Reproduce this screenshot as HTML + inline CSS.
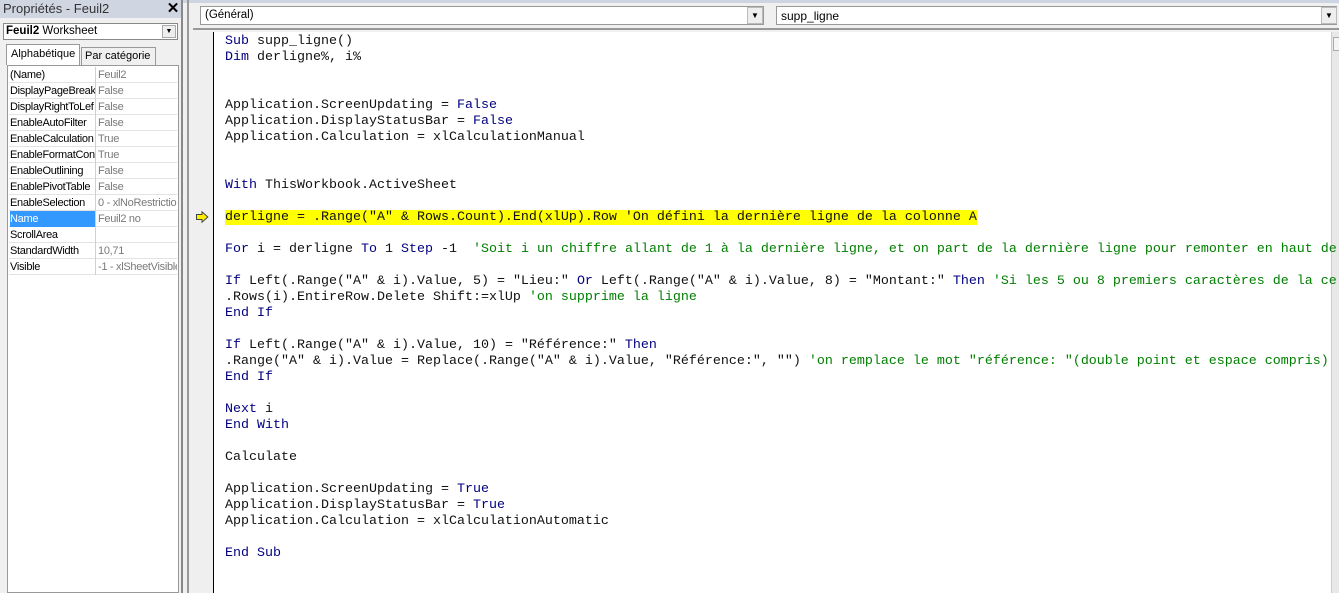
<!DOCTYPE html>
<html><head><meta charset="utf-8"><style>
*{margin:0;padding:0;box-sizing:border-box}
body{width:1339px;height:593px;overflow:hidden;background:#f0f0f0;position:relative;font-family:"Liberation Sans",sans-serif;font-size:11px}
.abs{position:absolute}
.code{position:absolute;left:225px;top:34px;font-family:"Liberation Mono",monospace;font-size:13.33px;line-height:16px;white-space:pre;color:#111}
.k{color:#00007f}.c{color:#007f00}
.hl{background:#ffff00}
.row{position:absolute;left:9px;width:168px;height:16px;border-bottom:1px solid #e3e3e3;font-size:11px;line-height:16px;letter-spacing:-0.3px}
.row span{position:absolute;top:0}
.row .n{left:1px;width:86px;overflow:hidden;white-space:nowrap;border-right:1px solid #d0d0d0;height:16px}
.row .v{left:89px;color:#7a7a7a;width:79px;overflow:hidden;white-space:nowrap}
</style></head><body>
<div class="abs" style="left:0;top:0;width:1339px;height:3px;background:#cdd5e2"></div>
<div class="abs" style="left:0;top:0;width:182px;height:18px;background:#cfd6e2"></div>
<div class="abs" style="left:3px;top:1px;font-size:13px;color:#333">Propriétés - Feuil2</div>
<div class="abs" style="left:165px;top:1px;width:16px;height:15px;font-size:15px;font-weight:bold;line-height:15px;text-align:center">✕</div>
<div class="abs" style="left:3px;top:23px;width:175px;height:17px;background:#fff;border:1px solid #888"></div>
<div class="abs" style="left:6px;top:25px;font-size:11.5px"><b>Feuil2</b> Worksheet</div>
<div class="abs" style="left:162px;top:25px;width:14px;height:13px;background:#eee;border:1px solid #aaa;font-size:7px;text-align:center;line-height:12px">▼</div>
<div class="abs" style="left:6px;top:44px;width:74px;height:21px;background:#fff;border:1px solid #999;border-bottom:none;font-size:11px;padding:3px 0 0 4px">Alphabétique</div>
<div class="abs" style="left:81px;top:47px;width:75px;height:18px;border:1px solid #999;border-bottom:none;font-size:11px;padding:2px 0 0 3px">Par catégorie</div>
<div class="abs" style="left:7px;top:65px;width:172px;height:528px;background:#fff;border:1px solid #999"></div>
<div class="row" style="top:67px"><span class="n">(Name)</span><span class="v">Feuil2</span></div>
<div class="row" style="top:83px"><span class="n">DisplayPageBreak</span><span class="v">False</span></div>
<div class="row" style="top:99px"><span class="n">DisplayRightToLef</span><span class="v">False</span></div>
<div class="row" style="top:115px"><span class="n">EnableAutoFilter</span><span class="v">False</span></div>
<div class="row" style="top:131px"><span class="n">EnableCalculation</span><span class="v">True</span></div>
<div class="row" style="top:147px"><span class="n">EnableFormatCon</span><span class="v">True</span></div>
<div class="row" style="top:163px"><span class="n">EnableOutlining</span><span class="v">False</span></div>
<div class="row" style="top:179px"><span class="n">EnablePivotTable</span><span class="v">False</span></div>
<div class="row" style="top:195px"><span class="n">EnableSelection</span><span class="v">0 - xlNoRestrictions</span></div>
<div class="row" style="top:211px"><span class="n" style="background:#3399ff;color:#fff">Name</span><span class="v">Feuil2 no</span></div>
<div class="row" style="top:227px"><span class="n">ScrollArea</span><span class="v"></span></div>
<div class="row" style="top:243px"><span class="n">StandardWidth</span><span class="v">10,71</span></div>
<div class="row" style="top:259px"><span class="n">Visible</span><span class="v">-1 - xlSheetVisible</span></div>
<div class="abs" style="left:181px;top:0;width:2px;height:593px;background:#888"></div>
<div class="abs" style="left:187px;top:0;width:2px;height:593px;background:#999"></div>
<div class="abs" style="left:193px;top:3px;width:1146px;height:27px;background:#f0f0f0;border-bottom:2px solid #999"></div>
<div class="abs" style="left:200px;top:6px;width:564px;height:19px;background:#fff;border:1px solid #999;font-size:11.5px;padding:2px 4px">(Général)</div>
<div class="abs" style="left:747px;top:7px;width:16px;height:17px;background:#eee;border:1px solid #bbb;font-size:8px;text-align:center;line-height:16px">▼</div>
<div class="abs" style="left:776px;top:6px;width:561px;height:19px;background:#fff;border:1px solid #999;font-size:12px;padding:2px 4px">supp_ligne</div>
<div class="abs" style="left:1321px;top:7px;width:16px;height:17px;background:#eee;border:1px solid #bbb;font-size:8px;text-align:center;line-height:16px">▼</div>
<div class="abs" style="left:193px;top:32px;width:20px;height:561px;background:#efefef"></div>
<div class="abs" style="left:213px;top:32px;width:1px;height:561px;background:#000"></div>
<div class="abs" style="left:214px;top:32px;width:1117px;height:561px;background:#fff"></div>
<div class="abs" style="left:1331px;top:32px;width:8px;height:561px;background:#e8e8e8;border-left:1px solid #ccc"></div>
<div class="abs" style="left:1333px;top:37px;width:6px;height:14px;background:#f4f4f4;border:1px solid #aaa;border-right:none"></div>
<svg class="abs" style="left:195px;top:211px" width="14" height="12" viewBox="0 0 14 12"><path d="M1.5 3.5H7V0.8L12.8 6L7 11.2V8.5H1.5Z" fill="#ffee00" stroke="#444" stroke-width="1"/></svg>
<div class="code"><span class="k">Sub</span> supp_ligne()
<span class="k">Dim</span> derligne%, i%


Application.ScreenUpdating = <span class="k">False</span>
Application.DisplayStatusBar = <span class="k">False</span>
Application.Calculation = xlCalculationManual


<span class="k">With</span> ThisWorkbook.ActiveSheet

<span class="hl">derligne = .Range("A" &amp; Rows.Count).End(xlUp).Row 'On défini la dernière ligne de la colonne A</span>

<span class="k">For</span> i = derligne <span class="k">To</span> 1 <span class="k">Step</span> -1  <span class="c">'Soit i un chiffre allant de 1 à la dernière ligne, et on part de la dernière ligne pour remonter en haut de</span>

<span class="k">If</span> Left(.Range("A" &amp; i).Value, 5) = "Lieu:" <span class="k">Or</span> Left(.Range("A" &amp; i).Value, 8) = "Montant:" <span class="k">Then</span> <span class="c">'Si les 5 ou 8 premiers caractères de la ce</span>
.Rows(i).EntireRow.Delete Shift:=xlUp <span class="c">'on supprime la ligne</span>
<span class="k">End If</span>

<span class="k">If</span> Left(.Range("A" &amp; i).Value, 10) = "Référence:" <span class="k">Then</span>
.Range("A" &amp; i).Value = Replace(.Range("A" &amp; i).Value, "Référence:", "") <span class="c">'on remplace le mot "référence: "(double point et espace compris)</span>
<span class="k">End If</span>

<span class="k">Next</span> i
<span class="k">End With</span>

Calculate

Application.ScreenUpdating = <span class="k">True</span>
Application.DisplayStatusBar = <span class="k">True</span>
Application.Calculation = xlCalculationAutomatic

<span class="k">End Sub</span></div>
</body></html>
